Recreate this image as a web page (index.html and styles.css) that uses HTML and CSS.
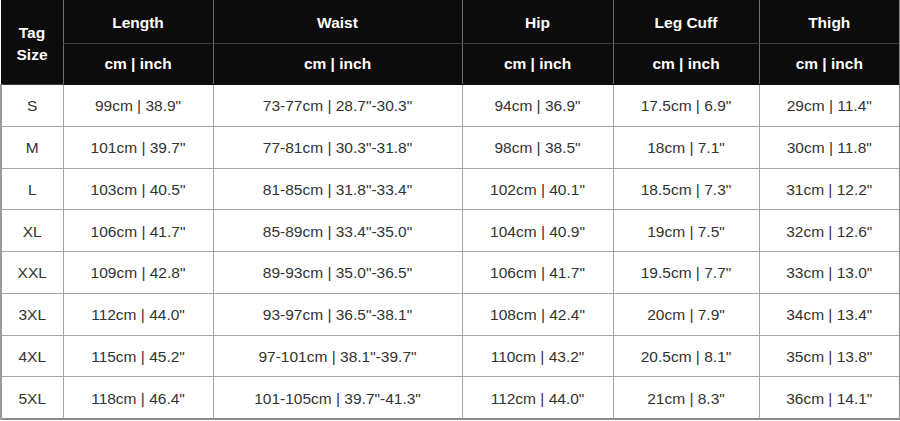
FILE: index.html
```html
<!DOCTYPE html>
<html>
<head>
<meta charset="utf-8">
<link rel="stylesheet" href="styles.css">
</head>
<body>
<table class="size-table">
  <colgroup>
    <col class="c-tag"><col class="c-len"><col class="c-waist"><col class="c-hip"><col class="c-cuff"><col class="c-thigh">
  </colgroup>
  <thead>
    <tr class="h1">
      <th rowspan="2" class="tag">Tag<br>Size</th>
      <th>Length</th><th>Waist</th><th>Hip</th><th>Leg Cuff</th><th>Thigh</th>
    </tr>
    <tr class="h2">
      <th>cm | inch</th><th>cm | inch</th><th>cm | inch</th><th>cm | inch</th><th>cm | inch</th>
    </tr>
  </thead>
  <tbody>
    <tr><td>S</td><td>99cm | 38.9"</td><td>73-77cm | 28.7"-30.3"</td><td>94cm | 36.9"</td><td>17.5cm | 6.9"</td><td>29cm | 11.4"</td></tr>
    <tr><td>M</td><td>101cm | 39.7"</td><td>77-81cm | 30.3"-31.8"</td><td>98cm | 38.5"</td><td>18cm | 7.1"</td><td>30cm | 11.8"</td></tr>
    <tr><td>L</td><td>103cm | 40.5"</td><td>81-85cm | 31.8"-33.4"</td><td>102cm | 40.1"</td><td>18.5cm | 7.3"</td><td>31cm | 12.2"</td></tr>
    <tr><td>XL</td><td>106cm | 41.7"</td><td>85-89cm | 33.4"-35.0"</td><td>104cm | 40.9"</td><td>19cm | 7.5"</td><td>32cm | 12.6"</td></tr>
    <tr><td>XXL</td><td>109cm | 42.8"</td><td>89-93cm | 35.0"-36.5"</td><td>106cm | 41.7"</td><td>19.5cm | 7.7"</td><td>33cm | 13.0"</td></tr>
    <tr><td>3XL</td><td>112cm | 44.0"</td><td>93-97cm | 36.5"-38.1"</td><td>108cm | 42.4"</td><td>20cm | 7.9"</td><td>34cm | 13.4"</td></tr>
    <tr><td>4XL</td><td>115cm | 45.2"</td><td>97-101cm | 38.1"-39.7"</td><td>110cm | 43.2"</td><td>20.5cm | 8.1"</td><td>35cm | 13.8"</td></tr>
    <tr><td>5XL</td><td>118cm | 46.4"</td><td>101-105cm | 39.7"-41.3"</td><td>112cm | 44.0"</td><td>21cm | 8.3"</td><td>36cm | 14.1"</td></tr>
  </tbody>
</table>
</body>
</html>
```
FILE: styles.css
```css
html, body {
  margin: 0;
  padding: 0;
  background: #ffffff;
}
.size-table {
  width: 899px;
  table-layout: fixed;
  border-collapse: collapse;
  font-family: "Liberation Sans", Arial, sans-serif;
  font-size: 15.5px;
  text-align: center;
  border-right: 2px solid #8a8a8a;
  border-bottom: 2px solid #8a8a8a;
}
.c-tag { width: 62px; }
.c-len { width: 150px; }
.c-waist { width: 249px; }
.c-hip { width: 151px; }
.c-cuff { width: 146px; }
.c-thigh { width: 141px; }

thead th {
  background: #0c0c0c;
  color: #ffffff;
  font-weight: bold;
  padding: 0;
  border-left: 1px solid #6e6e6e;
  border-bottom: 1px solid #3c3c3c;
}
thead .h1 th { height: 41px; padding-top: 2px; }
thead .h2 th { height: 40px; border-bottom: 1px solid #0c0c0c; }
thead th.tag {
  border-left: 1px solid #0c0c0c;
  line-height: 22px;
  padding-top: 4px;
}

tbody td {
  height: 38.75px;
  padding: 2px 0 0 0;
  color: #333333;
  border: 1px solid #a4a4a4;
}
tbody td:first-child {
  border-left: 2px solid #9a9a9a;
}
```
